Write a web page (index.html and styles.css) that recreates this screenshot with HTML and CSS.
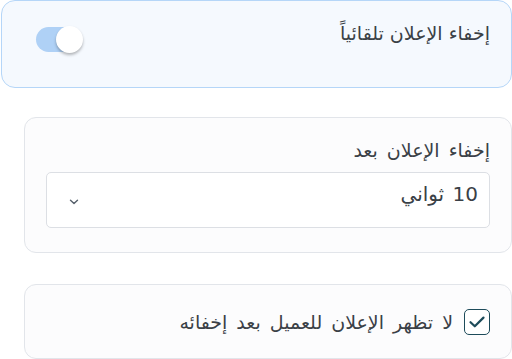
FILE: index.html
```html
<!DOCTYPE html>
<html lang="ar" dir="rtl">
<head>
<meta charset="utf-8">
<link rel="stylesheet" href="styles.css">
</head>
<body>
<div class="page">
  <section class="card card-auto">
    <span class="title">إخفاء الإعلان تلقائياً</span>
    <span class="toggle" role="switch" aria-checked="true"><span class="knob"></span></span>
  </section>
  <div class="inner">
    <section class="card card-plain card-select">
      <label class="label">إخفاء الإعلان بعد</label>
      <div class="select">
        <span class="value">10 ثواني</span>
        <svg class="chev" width="10" height="6" viewBox="0 0 10 6"><path d="M1.5 1.2 L5 4.6 L8.5 1.2" fill="none" stroke="#56606b" stroke-width="1.4" stroke-linecap="round" stroke-linejoin="round"/></svg>
      </div>
    </section>
    <section class="card card-plain card-check">
      <span class="checkbox">
        <svg width="18" height="14" viewBox="0 0 18 14"><path d="M2.5 7.2 L6.8 11.3 L15.5 2.6" fill="none" stroke="#1d4b5a" stroke-width="2.2" stroke-linecap="round" stroke-linejoin="round"/></svg>
      </span>
      <span class="check-label">لا تظهر الإعلان للعميل بعد إخفائه</span>
    </section>
  </div>
</div>
</body>
</html>
```

FILE: styles.css
```css
html, body {
  margin: 0;
  padding: 0;
  background: #ffffff;
}
body {
  font-family: "DejaVu Sans", sans-serif;
  color: #3a4046;
  font-size: 19px;
}
.page {
  width: 511px;
  display: flex;
  flex-direction: column;
}
.card {
  box-sizing: border-box;
  border-radius: 14px;
}
.card-auto {
  height: 88px;
  background: #f5f9fe;
  border: 1px solid #b5d6f8;
  display: flex;
  justify-content: space-between;
  align-items: flex-start;
  padding: 17px 21px 0 28px;
}
.title {
  font-size: 19px;
  line-height: 30px;
}
.toggle {
  position: relative;
  margin-top: 9px;
  width: 46px;
  height: 25px;
  border-radius: 13px;
  background: #afd1f6;
  margin-left: 6px;
}
.knob {
  position: absolute;
  top: -1px;
  left: 20px;
  width: 27px;
  height: 27px;
  border-radius: 50%;
  background: #ffffff;
  box-shadow: 0 2px 3px rgba(0, 0, 0, 0.28);
}
.inner {
  padding-left: 23px;
  display: flex;
  flex-direction: column;
  gap: 31px;
  margin-top: 29px;
}
.card-plain {
  background: #fcfcfd;
  border: 1px solid #e2e5ea;
  border-radius: 12px;
}
.card-select {
  height: 136px;
  padding: 17px 21px 0 21px;
}
.label {
  display: block;
  font-size: 19px;
  line-height: 30px;
  margin-bottom: 7px;
  word-spacing: 3px;
}
.select {
  box-sizing: border-box;
  height: 56px;
  background: #ffffff;
  border: 1px solid #dcdfe4;
  border-radius: 5px;
  display: flex;
  justify-content: space-between;
  align-items: flex-start;
  padding: 6px 11px 0 22px;
}
.value {
  font-size: 20px;
  line-height: 30px;
  word-spacing: 2px;
}
.chev {
  margin-top: 20px;
}
.card-check {
  height: 75px;
  display: flex;
  align-items: center;
  gap: 11px;
  padding: 0 21px;
}
.checkbox {
  box-sizing: border-box;
  width: 26px;
  height: 26px;
  border: 1.5px solid #1d4b5a;
  border-radius: 5px;
  display: flex;
  align-items: center;
  justify-content: center;
  background: #ffffff;
}
.check-label {
  font-size: 19px;
  line-height: 30px;
  word-spacing: 3px;
}
```
